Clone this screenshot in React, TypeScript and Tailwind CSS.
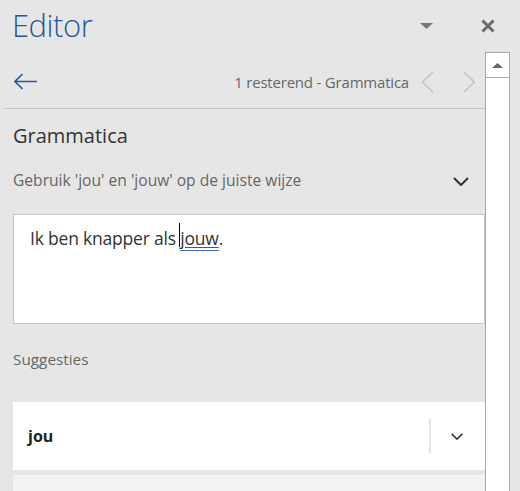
import React from "react";

const font = { fontFamily: '"Open Sans", "Noto Sans", sans-serif' };

const ChevronDown = ({ className }: { className?: string }) => (
  <svg viewBox="0 0 16 9" className={className} fill="none" stroke="currentColor" strokeWidth="2">
    <path d="M1 1l7 7 7-7" />
  </svg>
);

export default function App() {
  return (
    <div className="w-[520px] h-[491px] overflow-hidden bg-[#e6e6e6] flex flex-col" style={font}>
      {/* header */}
      <div className="h-[52px] flex items-start shrink-0">
        <h1 className="ml-[12px] mt-[5px] text-[31px] leading-[40px] font-light text-[#2b579a] tracking-[-0.5px]">Editor</h1>
        <div className="flex-1" />
        <svg viewBox="0 0 13 6" className="w-[13px] h-[6px] mt-[23px] mr-[48px] text-[#767676]" fill="currentColor">
          <path d="M0 0h13L6.5 6z" />
        </svg>
        <svg viewBox="0 0 14 14" className="w-[14px] h-[14px] mt-[19px] mr-[25px] text-[#6b6b6b]" fill="none" stroke="currentColor" strokeWidth="3">
          <path d="M1.5 1.5l11 11M12.5 1.5l-11 11" />
        </svg>
      </div>

      <div className="flex flex-1 min-h-0">
        {/* content */}
        <div className="w-[485px] shrink-0">
          <div className="h-[57px] ml-[4px] border-b border-[#c6c6c6] flex items-center">
            <svg viewBox="0 0 23 17" className="w-[23px] h-[17px] ml-[10px] mt-[3px] text-[#2b579a]" fill="none" stroke="currentColor" strokeWidth="1.6">
              <path d="M1 8.5h22M8.5 1L1 8.5 8.5 16" />
            </svg>
            <div className="flex-1" />
            <span className="text-[15px] text-[#666666] mt-[4px] tracking-[-0.2px]">1 resterend - Grammatica</span>
            <svg viewBox="0 0 13 22" className="w-[13px] h-[22px] ml-[12px] mt-[3px] text-[#c2c2c2]" fill="none" stroke="currentColor" strokeWidth="1.5">
              <path d="M12 1L1.5 11 12 21" />
            </svg>
            <svg viewBox="0 0 13 22" className="w-[13px] h-[22px] ml-[29px] mr-[9px] mt-[3px] text-[#c2c2c2]" fill="none" stroke="currentColor" strokeWidth="1.5">
              <path d="M1 1l10.5 10L1 21" />
            </svg>
          </div>

          <div className="pl-[13px]">
            <div className="mt-[14px] text-[20px] leading-[26px] text-[#333333]">Grammatica</div>
            <div className="mt-[20px] flex items-center h-[24px]">
              <span className="text-[15.6px] text-[#666666]">Gebruik 'jou' en 'jouw' op de juiste wijze</span>
              <div className="flex-1" />
              <ChevronDown className="w-[16px] h-[9px] mr-[16px] text-[#333333]" />
            </div>

            <div className="mt-[21px] h-[110px] bg-white border border-[#c6c6c6] pl-[16px] pt-[10px]">
              <span className="text-[17.5px] text-[#333333] tracking-[-0.2px]">
                Ik ben knapper als{" "}
                <span className="relative underline decoration-[#555555] underline-offset-[2px] border-b border-[#3a6fc4]">
                  <span className="absolute left-[-1px] top-[-3px] w-[1px] h-[24px] bg-black" />
                  jouw
                </span>
                .
              </span>
            </div>

            <div className="mt-[25px] text-[15.3px] leading-[20px] text-[#666666]">Suggesties</div>

            <div className="mt-[33px] h-[68px] bg-white flex items-center">
              <span className="ml-[15px] text-[16px] font-bold text-[#222222]">jou</span>
              <div className="flex-1" />
              <div className="w-[2px] h-[34px] bg-[#e6e6e6]" />
              <ChevronDown className="w-[12px] h-[7px] ml-[20px] mr-[22px] text-[#333333]" />
            </div>
            <div className="mt-[5px] h-[40px] bg-[#f3f3f3]" />
          </div>
        </div>

        {/* scrollbar */}
        <div className="w-[25px] bg-white border border-b-0 border-[#a8a8a8] flex flex-col">
          <div className="h-[25px] border-b border-[#a8a8a8] flex items-center justify-center">
            <svg viewBox="0 0 11 5" className="w-[11px] h-[5px] text-[#666666]" fill="currentColor">
              <path d="M0 5h11L5.5 0z" />
            </svg>
          </div>
        </div>
      </div>
    </div>
  );
}
